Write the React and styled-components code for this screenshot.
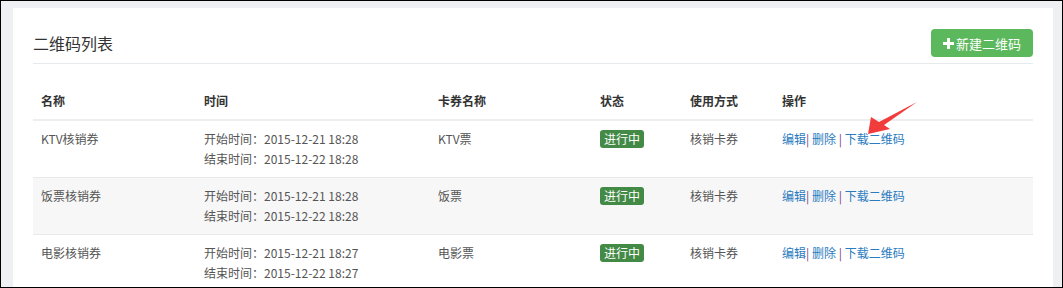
import React from "react";
import styled, { createGlobalStyle } from "styled-components";

const rows = [
  { name: "KTV核销券", start: "2015-12-21 18:28", end: "2015-12-22 18:28", card: "KTV票" },
  { name: "饭票核销券", start: "2015-12-21 18:28", end: "2015-12-22 18:28", card: "饭票" },
  { name: "电影核销券", start: "2015-12-21 18:27", end: "2015-12-22 18:27", card: "电影票" },
];

const cols = [
  { title: "名称", width: 163 },
  { title: "时间", width: 234 },
  { title: "卡券名称", width: 162 },
  { title: "状态", width: 90 },
  { title: "使用方式", width: 92 },
  { title: "操作" },
];

const GlobalStyle = createGlobalStyle`
  body {
    margin: 0;
    font-family: "Noto Sans CJK SC", "Open Sans", sans-serif;
    font-size: 12px;
    color: #555;
  }
`;

const Frame = styled.div`
  box-sizing: border-box;
  width: 1063px;
  height: 288px;
  border: 1px solid #000;
  background: #eff0f3;
  padding: 7px 9px 0 12px;
  overflow: hidden;
  position: relative;
`;

const Panel = styled.div`
  background: #fff;
  padding: 0 20px 20px;
  height: 100%;
`;

const PanelHead = styled.div`
  display: flex;
  align-items: center;
  justify-content: space-between;
  padding: 21px 0 6px;
  border-bottom: 1px solid #e7eaec;
`;

const Title = styled.h3`
  margin: 0;
  font-size: 16px;
  font-weight: 400;
  color: #333;
`;

const AddButton = styled.button`
  display: flex;
  align-items: center;
  gap: 2px;
  height: 28px;
  padding: 0 12px;
  border: 0;
  border-radius: 4px;
  background: #5cb85c;
  color: #fff;
  font-family: inherit;
  font-size: 13px;
  cursor: pointer;
`;

const Table = styled.table`
  width: 100%;
  margin-top: 19px;
  border-collapse: collapse;
  table-layout: fixed;
`;

const Th = styled.th`
  text-align: left;
  padding: 8px;
  line-height: 20px;
  font-weight: 700;
  color: #333;
  border-bottom: 2px solid #eceeef;
`;

const Tr = styled.tr`
  background: ${(p) => (p.$striped ? "#f7f7f7" : "#fff")};
`;

const Td = styled.td`
  vertical-align: top;
  padding: 8px;
  line-height: 20px;
  border-top: 1px solid #e7eaec;
  color: #555;
`;

const Badge = styled.span`
  display: inline-block;
  padding: 0 4px;
  line-height: 18px;
  margin-top: 1px;
  border-radius: 3px;
  background: #438a46;
  color: #fff;
`;

const Link = styled.a`
  color: #2a7bc0;
  text-decoration: none;
  cursor: pointer;
`;

const Sep = styled.span`
  color: #7d3a8c;
`;

const Arrow = styled.svg`
  position: absolute;
  left: 860px;
  top: 96px;
`;

const PlusIcon = () => (
  <svg width="11" height="11" viewBox="0 0 11 11">
    <rect x="4" y="0" width="3" height="11" fill="#fff" />
    <rect x="0" y="4" width="11" height="3" fill="#fff" />
  </svg>
);

const App = () => (
  <Frame>
    <GlobalStyle />
    <Panel>
      <PanelHead>
        <Title>二维码列表</Title>
        <AddButton>
          <PlusIcon />
          新建二维码
        </AddButton>
      </PanelHead>
      <Table>
        <colgroup>
          {cols.map((c) => (
            <col key={c.title} style={c.width ? { width: c.width } : undefined} />
          ))}
        </colgroup>
        <thead>
          <tr>
            {cols.map((c) => (
              <Th key={c.title}>{c.title}</Th>
            ))}
          </tr>
        </thead>
        <tbody>
          {rows.map((r, i) => (
            <Tr key={r.name} $striped={i % 2 === 1}>
              <Td>{r.name}</Td>
              <Td>
                <div>开始时间：{r.start}</div>
                <div>结束时间：{r.end}</div>
              </Td>
              <Td>{r.card}</Td>
              <Td>
                <Badge>进行中</Badge>
              </Td>
              <Td>核销卡券</Td>
              <Td>
                <Link>编辑</Link>
                <Sep>|</Sep> <Link>删除</Link> <Sep>|</Sep>{" "}
                <Link>下载二维码</Link>
              </Td>
            </Tr>
          ))}
        </tbody>
      </Table>
    </Panel>
    <Arrow width="60" height="42" viewBox="0 0 60 42">
      <path d="M56 5 L18 25 L10 20 L7 37 L29 32 L23 28 Z" fill="#f23c3c" />
    </Arrow>
  </Frame>
);

export default App;
